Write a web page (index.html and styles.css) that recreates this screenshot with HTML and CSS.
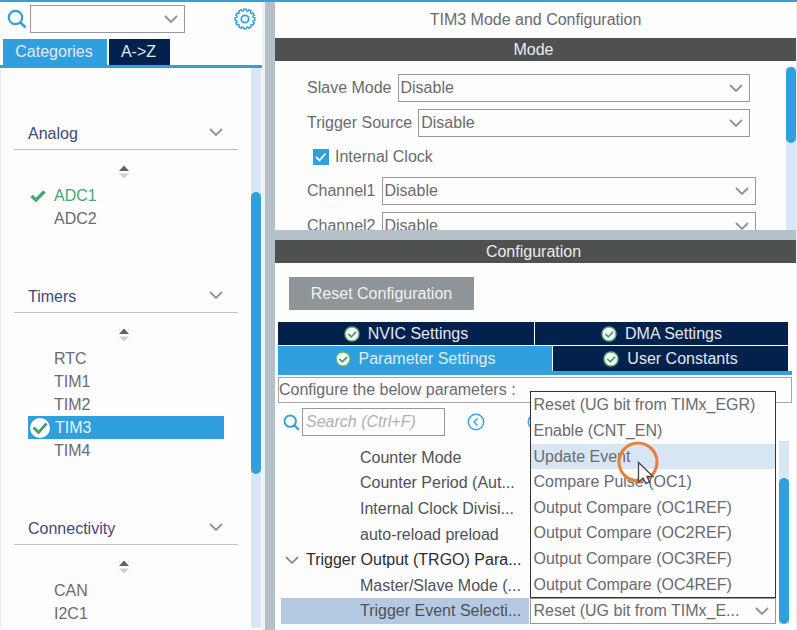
FILE: index.html
```html
<!DOCTYPE html>
<html lang="en">
<head>
<meta charset="utf-8">
<title>TIM3 Mode and Configuration</title>
<link rel="stylesheet" href="styles.css">
</head>
<body>
<svg class="defs" aria-hidden="true">
  <symbol id="chevron" viewBox="0 0 14 8"><path d="M1 1l6 6 6-6" fill="none" stroke="currentColor" stroke-width="1.8"/></symbol>
  <symbol id="lens" viewBox="0 0 20 20"><circle cx="8.5" cy="8.5" r="6.700" fill="none" stroke="currentColor" stroke-width="2.200"/><path d="M13 13l5.500 5.500" stroke="currentColor" stroke-width="2.6"/></symbol>
  <symbol id="sorter" viewBox="0 0 10 14"><path d="M0 6l5-5.500 5 5.500z" fill="#606060"/><path d="M0 8.500h10l-5 5z" fill="#cfcfcf"/></symbol>
  <symbol id="badge" viewBox="0 0 16 16"><circle cx="8" cy="8" r="7" fill="#f4fff6" stroke="#63b07e" stroke-width="1.4"/><path d="M4.300 7.800l3 3 4.800-5" fill="none" stroke="#4c9c6c" stroke-width="1.700"/></symbol>
</svg>
<div class="app">
  <aside class="sidebar">
    <div class="finder">
      <svg class="lens"><use href="#lens"/></svg>
      <div class="combo finder-combo">
        <select aria-label="Find peripheral"><option></option></select>
        <svg class="chevron"><use href="#chevron"/></svg>
      </div>
      <button class="icon-button gear-button" aria-label="Settings">
        <svg class="gear" viewBox="0 0 22 22" fill="none" stroke="currentColor" stroke-width="1.600">
          <path id="tooth" d="M8.880 3.080Q9.600 2.900 9.700 1.200H12.300Q12.400 2.900 13.120 3.080"/>
          <use href="#tooth" transform="rotate(30 11 11)"/>
          <use href="#tooth" transform="rotate(60 11 11)"/>
          <use href="#tooth" transform="rotate(90 11 11)"/>
          <use href="#tooth" transform="rotate(120 11 11)"/>
          <use href="#tooth" transform="rotate(150 11 11)"/>
          <use href="#tooth" transform="rotate(180 11 11)"/>
          <use href="#tooth" transform="rotate(210 11 11)"/>
          <use href="#tooth" transform="rotate(240 11 11)"/>
          <use href="#tooth" transform="rotate(270 11 11)"/>
          <use href="#tooth" transform="rotate(300 11 11)"/>
          <use href="#tooth" transform="rotate(330 11 11)"/>
          <circle cx="11" cy="11" r="3.700" stroke-width="1.800"/>
        </svg>
      </button>
    </div>
    <div class="side-tabs">
      <button class="tab active">Categories</button>
      <button class="tab">A-&gt;Z</button>
    </div>
    <div class="tree-pane">
      <div class="categories">
        <section class="category">
          <h3>Analog <svg class="chevron"><use href="#chevron"/></svg></h3>
          <svg class="sorter"><use href="#sorter"/></svg>
          <ul>
            <li class="ok"><svg class="tick" viewBox="0 0 16 12"><path d="M1.500 6l4.500 4 8.500-8.500" fill="none" stroke="#4aa574" stroke-width="3.400"/></svg><span>ADC1</span></li>
            <li><span>ADC2</span></li>
          </ul>
        </section>
        <section class="category">
          <h3>Timers <svg class="chevron"><use href="#chevron"/></svg></h3>
          <svg class="sorter"><use href="#sorter"/></svg>
          <ul>
            <li><span>RTC</span></li>
            <li><span>TIM1</span></li>
            <li><span>TIM2</span></li>
            <li class="current"><svg class="disc" viewBox="0 0 20 20"><circle cx="10" cy="10" r="10" fill="#fff"/><path d="M3.500 9.500l5 5 8-9" fill="none" stroke="#4a9f6c" stroke-width="2.800"/></svg><span>TIM3</span></li>
            <li><span>TIM4</span></li>
          </ul>
        </section>
        <section class="category">
          <h3>Connectivity <svg class="chevron"><use href="#chevron"/></svg></h3>
          <svg class="sorter"><use href="#sorter"/></svg>
          <ul>
            <li><span>CAN</span></li>
            <li><span>I2C1</span></li>
          </ul>
        </section>
      </div>
      <div class="scrollbar side-scroll"><div class="thumb"></div></div>
    </div>
  </aside>

  <main class="main">
    <h1>TIM3 Mode and Configuration</h1>
    <h2 class="bar">Mode</h2>
    <section class="mode">
      <form class="fields">
        <div class="field"><label for="slave">Slave Mode</label>
          <div class="combo"><select id="slave"><option>Disable</option></select><svg class="chevron"><use href="#chevron"/></svg></div></div>
        <div class="field"><label for="source">Trigger Source</label>
          <div class="combo"><select id="source"><option>Disable</option></select><svg class="chevron"><use href="#chevron"/></svg></div></div>
        <div class="field check"><input type="checkbox" id="clock" checked><svg class="mark" viewBox="0 0 16 16"><path d="M3 8l3.500 3.500 6-7" fill="none" stroke="#fff" stroke-width="1.800"/></svg><label for="clock">Internal Clock</label></div>
        <div class="field wide"><label for="ch1">Channel1</label>
          <div class="combo"><select id="ch1"><option>Disable</option></select><svg class="chevron"><use href="#chevron"/></svg></div></div>
        <div class="field wide"><label for="ch2">Channel2</label>
          <div class="combo"><select id="ch2"><option>Disable</option></select><svg class="chevron"><use href="#chevron"/></svg></div></div>
      </form>
      <div class="scrollbar mode-scroll"><div class="thumb"></div></div>
    </section>
    <div class="splitter"></div>
    <h2 class="bar">Configuration</h2>
    <section class="config">
      <button class="reset">Reset Configuration</button>
      <div class="tabs">
        <div class="tab-row">
          <button class="tab"><svg class="badge"><use href="#badge"/></svg>NVIC Settings</button>
          <button class="tab"><svg class="badge"><use href="#badge"/></svg>DMA Settings</button>
        </div>
        <div class="tab-row lower">
          <button class="tab active"><svg class="badge"><use href="#badge"/></svg>Parameter Settings</button>
          <button class="tab"><svg class="badge"><use href="#badge"/></svg>User Constants</button>
        </div>
      </div>
      <p class="caption">Configure the below parameters :</p>
      <div class="search">
        <svg class="lens"><use href="#lens"/></svg>
        <input type="text" placeholder="Search (Ctrl+F)" aria-label="Search parameters">
        <button class="icon-button" aria-label="Previous"><svg class="step" viewBox="0 0 18 18" fill="none" stroke="currentColor" stroke-width="1.500"><circle cx="9" cy="9" r="7.700"/><path d="M10.500 5.500l-3.500 3.500 3.500 3.500"/></svg></button>
        <button class="icon-button" aria-label="Next"><svg class="step" viewBox="0 0 18 18" fill="none" stroke="currentColor" stroke-width="1.500"><circle cx="9" cy="9" r="7.700"/><path d="M7.500 5.500l3.500 3.500-3.500 3.500"/></svg></button>
      </div>
      <div class="params">
        <div class="rows">
          <div class="param"><span class="name">Counter Mode</span></div>
          <div class="param"><span class="name">Counter Period (Aut...</span></div>
          <div class="param"><span class="name">Internal Clock Divisi...</span></div>
          <div class="param"><span class="name">auto-reload preload</span></div>
          <div class="param group"><span class="name"><svg class="chevron"><use href="#chevron"/></svg>Trigger Output (TRGO) Para...</span></div>
          <div class="param"><span class="name">Master/Slave Mode (...</span></div>
          <div class="param selected"><label class="name" for="event">Trigger Event Selecti...</label>
            <div class="value">
              <div class="combo"><select id="event"><option>Reset (UG bit from TIMx_E...</option></select><svg class="chevron"><use href="#chevron"/></svg></div>
              <ul class="popup" role="listbox">
                <li role="option">Reset (UG bit from TIMx_EGR)</li>
                <li role="option">Enable (CNT_EN)</li>
                <li role="option" class="hover">Update Event
                  <svg class="pointer" viewBox="0 0 42 42"><circle cx="21" cy="21" r="19" fill="none" stroke="#ef7d35" stroke-width="3"/><path d="M21.500 21.500v19.500l4.500-4 3 5.500 3.500-1.500-2.500-5.500h6z" fill="#fff" stroke="#4b4b52" stroke-width="1.400"/></svg>
                </li>
                <li role="option">Compare Pulse (OC1)</li>
                <li role="option">Output Compare (OC1REF)</li>
                <li role="option">Output Compare (OC2REF)</li>
                <li role="option">Output Compare (OC3REF)</li>
                <li role="option">Output Compare (OC4REF)</li>
              </ul>
            </div>
          </div>
        </div>
        <div class="scrollbar param-scroll"><div class="thumb"></div></div>
      </div>
    </section>
  </main>
</div>
</body>
</html>
```
FILE: styles.css
```css
* { box-sizing: border-box; }

body {
  margin: 0;
  background: #fdfdfd;
  color: #6a6b70;
  font: 16px/20px "Liberation Sans", Arial, sans-serif;
}

h1, h2, h3, p, ul { margin: 0; padding: 0; font-size: 16px; font-weight: normal; }
ul { list-style: none; }
button, input, select { margin: 0; padding: 0; border: 0; border-radius: 0; background: none; color: inherit; font: inherit; }
svg { display: block; flex: none; }

.defs { position: absolute; width: 0; height: 0; }
.chevron { width: 14px; height: 8px; color: #919191; }
.lens { width: 20px; height: 20px; color: #369fd9; }
.sorter { width: 10px; height: 14px; }
.badge { width: 16px; height: 16px; }

.app {
  display: grid;
  grid-template-columns: 265px minmax(0, 1fr);
  height: 100vh;
  overflow: hidden;
  border-top: 2px solid #36a0da;
}

/* Shared controls */
.combo { display: grid; flex: 1; align-items: center; height: 28px; border: 1px solid #96989b; background: #fdfdfd; }
.combo select { grid-area: 1 / 1; width: 100%; height: 100%; padding-left: 2px; appearance: none; outline: 0; }
.combo .chevron { grid-area: 1 / 1; justify-self: end; margin-right: 6px; pointer-events: none; }
.icon-button { display: flex; color: #3ba3dc; }
.scrollbar { width: 10px; background: #d8e7f5; }
.thumb { border-radius: 5px; background: #2f9fdd; }

.tab { display: flex; align-items: center; justify-content: center; gap: 8px; background: #02214c; color: #e4e9f0; }
.tab.active { background: #2f9fdd; }

/* Sidebar */
.sidebar { display: flex; flex-direction: column; min-height: 0; border-right: 3px solid #edf2f5; }
.finder { display: flex; align-items: center; padding: 3px 6px 0 7px; }
.finder-combo { flex: none; width: 155px; margin-left: 3px; }
.gear-button { margin-left: auto; }
.gear { width: 22px; height: 22px; }
.side-tabs { display: flex; gap: 2px; height: 35px; padding: 6px 0 0 3px; border-bottom: 3px solid #369fd9; }
.side-tabs .tab { width: 61px; padding-right: 2px; }
.side-tabs .active { width: 104px; }
.tree-pane { display: flex; flex: 1; min-height: 0; margin-bottom: 2px; border-left: 1px solid #ececec; }
.categories { flex: 1; padding: 51px 13px 0 13px; overflow: hidden; }
.category { display: flex; flex-direction: column; margin-bottom: 52px; }
.category h3 { display: flex; align-items: center; justify-content: space-between; height: 31px; padding: 0 15px 0 14px; border-bottom: 1px solid #bac5ca; color: #3f4a7e; }
.category h3 .chevron { margin-bottom: 4px; }
.category .sorter { align-self: center; margin: 15px 4px 5px 0; }
.category ul { padding: 0 14px; }
.category li { display: flex; align-items: center; height: 23px; }
.category li span { margin-left: 26px; }
.category .ok { color: #4aa574; }
.category .current { background: #2f9fdd; color: #e6f3fb; }
.tick { width: 16px; height: 12px; margin-left: 2px; }
.disc { width: 20px; height: 20px; margin-left: 2px; }
.category .tick + span { margin-left: 8px; }
.category .disc + span { margin-left: 5px; }
.side-scroll { margin-right: 1px; padding-top: 124px; }
.side-scroll .thumb { height: 282px; }

/* Mode pane */
.main { display: flex; flex-direction: column; min-width: 0; min-height: 0; border-right: 1px solid #e3edf3; border-left: 10px solid #b5c1c8; }
h1 { height: 36px; line-height: 36px; text-align: center; flex: none; }
.bar { flex: none; height: 23px; padding-right: 4px; background: #4e5150; color: #ececec; line-height: 23px; text-align: center; }
.mode { display: flex; flex: none; height: 169px; overflow: hidden; }
.fields { display: flex; flex: 1; flex-direction: column; gap: 7px; padding: 13px 30px 0 32px; }
.field { display: flex; flex: none; align-items: center; gap: 6px; margin-right: 6px; }
.field.wide { margin-right: 0; }
.check { display: grid; grid-template-columns: 16px auto; justify-content: start; gap: 6px; height: 26px; padding-left: 6px; }
.check input { grid-area: 1 / 1; width: 16px; height: 16px; appearance: none; background: #2f9fdd; }
.mark { grid-area: 1 / 1; width: 16px; height: 16px; pointer-events: none; }
.mode-scroll { margin-top: 6px; }
.mode-scroll .thumb { height: 76px; }
.splitter { flex: none; height: 10px; background: #b5c1c8; }

/* Configuration pane */
.config { display: flex; flex: 1; flex-direction: column; min-height: 0; padding: 14px 4px 6px 3px; }
.reset { align-self: flex-start; flex: none; width: 185px; height: 33px; margin-left: 11px; background: #8e9699; color: #f0f2f3; }
.tabs { display: flex; flex: none; flex-direction: column; gap: 1px; margin-top: 12px; padding-right: 4px; border-bottom: 4px solid #36a0da; }
.tab-row { display: grid; grid-template-columns: 256fr 253fr; gap: 1px; height: 23px; }
.tab-row.lower { grid-template-columns: 274fr 235fr; height: 25px; }
.caption { flex: none; height: 26px; margin-top: 2px; border: 1px solid #a3a5a7; line-height: 24px; }
.search { display: flex; flex: none; align-items: center; margin-top: 5px; padding-left: 5px; }
.search .lens { width: 17px; height: 17px; }
.search input { width: 143px; height: 28px; margin: 0 22px 0 2px; padding-left: 3px; border: 1px solid #96989b; }
.search input::placeholder { color: #b0b0b0; font-style: italic; opacity: 1; }
.step { width: 18px; height: 18px; margin-right: 42px; }
.params { display: flex; flex: 1; gap: 3px; min-height: 0; margin-top: 5px; padding-right: 3px; }
.rows { display: flex; flex: 1; flex-direction: column; padding: 4px 0 0 3px; }
.param { display: grid; flex: 1; grid-template-columns: 249fr 246fr; gap: 1px; }
.name { display: flex; align-items: center; padding-left: 79px; color: #505157; white-space: nowrap; }
.group .name { gap: 7px; padding-left: 4px; color: #2b2c30; }
.selected .name { background: #b4cae3; }
.value { position: relative; display: flex; }
.value .combo { height: auto; }
.popup { position: absolute; right: 0; bottom: 100%; left: 0; display: flex; flex-direction: column; height: 207px; border: 1px solid #333; background: #fdfdfd; }
.popup li { position: relative; display: flex; flex: 1; align-items: center; padding-left: 2px; white-space: nowrap; }
.popup .hover { background: #d8e6f4; }
.pointer { position: absolute; top: -3px; left: 86px; z-index: 1; width: 42px; height: 42px; overflow: visible; }
.param-scroll { padding-top: 37px; }
.param-scroll .thumb { height: 100%; }
```
